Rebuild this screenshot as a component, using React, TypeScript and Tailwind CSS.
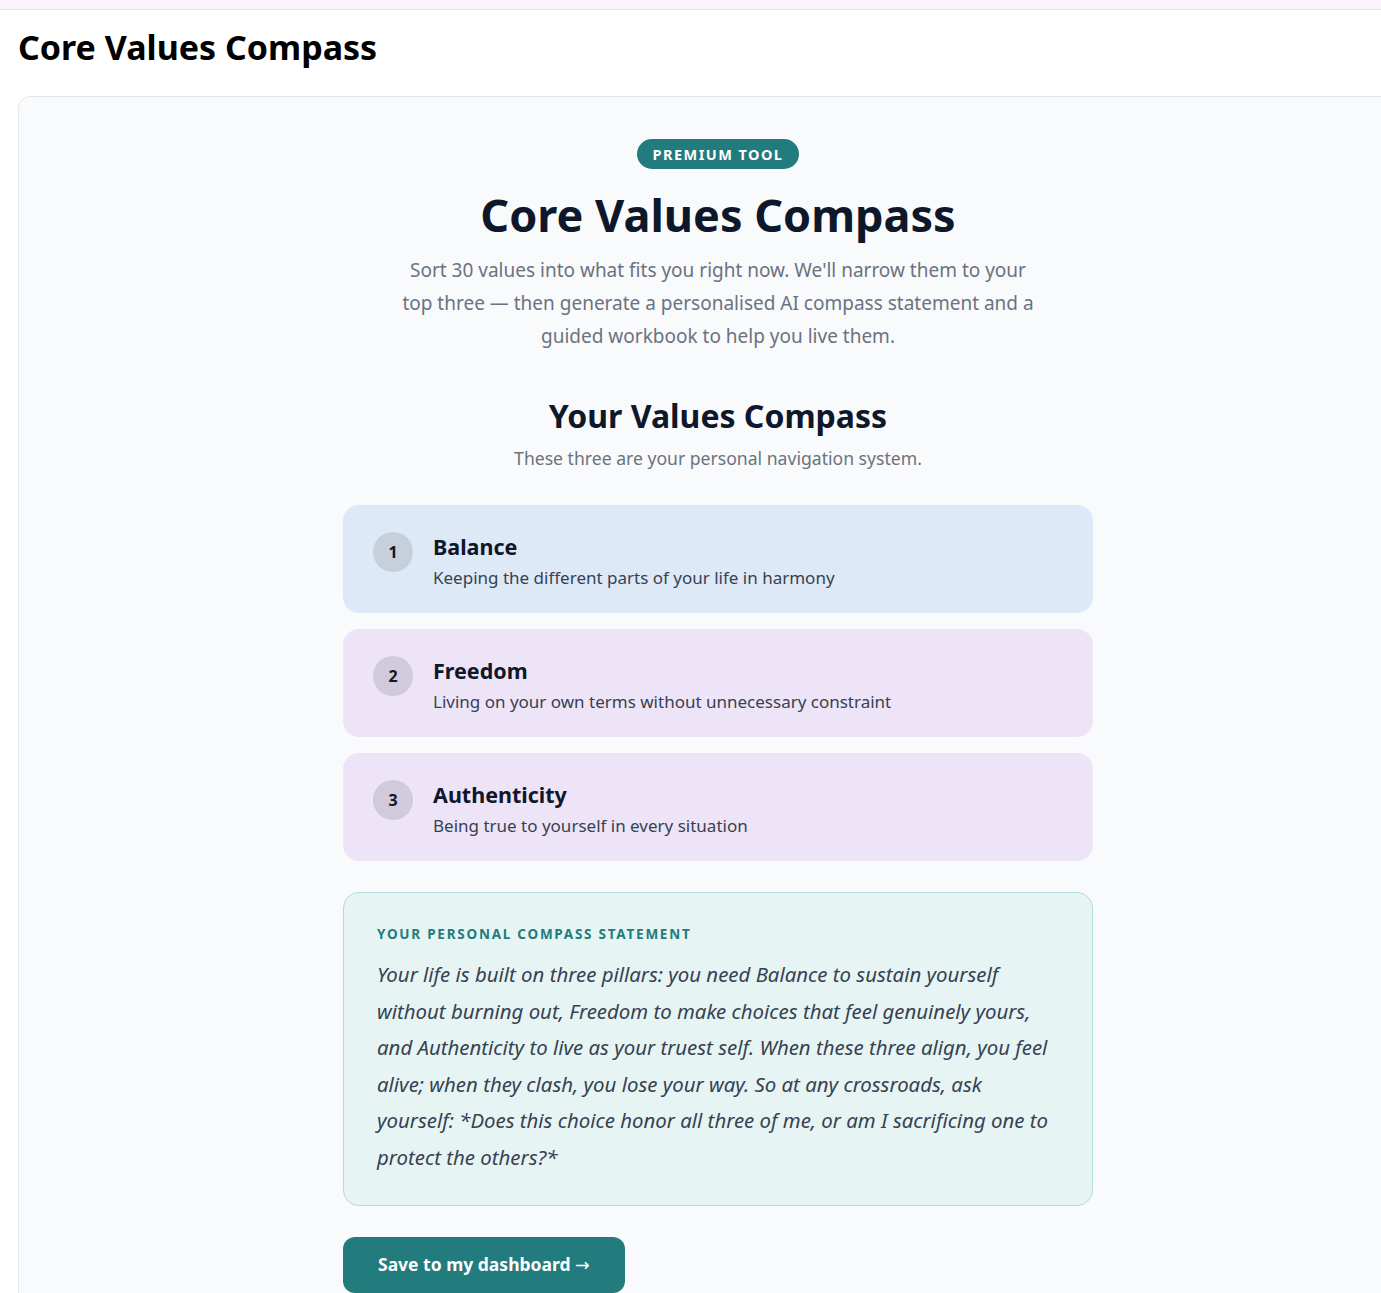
const values = [
  {
    rank: 1,
    name: "Balance",
    desc: "Keeping the different parts of your life in harmony",
    tone: "bg-[#dde9f7]",
    dot: "bg-[#c6d0dd]",
  },
  {
    rank: 2,
    name: "Freedom",
    desc: "Living on your own terms without unnecessary constraint",
    tone: "bg-[#ede4f7]",
    dot: "bg-[#d0cadb]",
  },
  {
    rank: 3,
    name: "Authenticity",
    desc: "Being true to yourself in every situation",
    tone: "bg-[#ede4f7]",
    dot: "bg-[#d0cadb]",
  },
];

function ValueRow({ v }: { v: (typeof values)[number] }) {
  return (
    <div className={`flex items-start gap-5 rounded-2xl px-[30px] pt-[27px] pb-[19px] ${v.tone}`}>
      <span
        className={`flex h-10 w-10 shrink-0 items-center justify-center rounded-full text-[16px] font-bold text-[#111827] ${v.dot}`}
      >
        {v.rank}
      </span>
      <div className="min-w-0">
        <div className="text-[21.5px] font-bold leading-[30px] text-[#0f172a]">{v.name}</div>
        <div className="text-[17px] leading-[32px] text-[#374151]">{v.desc}</div>
      </div>
    </div>
  );
}

export default function App() {
  return (
    <div className="min-h-screen overflow-hidden bg-white font-['Noto_Sans',sans-serif]">
      <div className="h-[10px] border-b border-[#ebe3ec] bg-[#fcf2fb]" />
      <h1 className="px-[18px] pt-[14px] text-[34px] font-bold leading-[46px] text-black">
        Core Values Compass
      </h1>
      <div className="mt-[26px] ml-[18px] w-[1400px] rounded-tl-xl border border-[#e3e6ea] bg-[#f8fafc] pt-[41px] pb-10">
        <div className="mx-auto flex w-[750px] flex-col">
          <div className="flex flex-col items-center text-center">
            <span className="mt-px rounded-full bg-[#227b7d] px-4 py-[5px] text-[14.5px] font-bold leading-5 tracking-[0.1em] text-white">
              PREMIUM TOOL
            </span>
            <h2 className="mt-[17px] text-[45px] font-bold leading-[58px] text-[#0f172a]">
              Core Values Compass
            </h2>
            <p className="mt-[10px] w-[640px] text-[19px] leading-[33px] text-[#6b7280]">
              Sort 30 values into what fits you right now. We'll narrow them to your top three — then
              generate a personalised AI compass statement and a guided workbook to help you live them.
            </p>
            <h3 className="mt-[41px] text-[32px] font-bold leading-[44px] text-[#0f172a]">
              Your Values Compass
            </h3>
            <p className="mt-[5px] text-[17.6px] leading-[30px] text-[#6b7280]">
              These three are your personal navigation system.
            </p>
          </div>

          <div className="mt-[32px] flex flex-col gap-4">
            {values.map((v) => (
              <ValueRow key={v.rank} v={v} />
            ))}
          </div>

          <div className="mt-[31px] rounded-2xl border border-[#b3dcdc] bg-[#e6f4f4] px-[33px] pt-[31px] pb-[29px]">
            <div className="text-[13.5px] font-bold leading-5 tracking-[0.13em] text-[#227b7d]">
              YOUR PERSONAL COMPASS STATEMENT
            </div>
            <p className="mt-[12px] text-[20.4px] italic leading-[36.6px] text-[#374151]">
              Your life is built on three pillars: you need Balance to sustain yourself without burning
              out, Freedom to make choices that feel genuinely yours, and Authenticity to live as your
              truest self. When these three align, you feel alive; when they clash, you lose your way. So
              at any crossroads, ask yourself: *Does this choice honor all three of me, or am I
              sacrificing one to protect the others?*
            </p>
          </div>

          <div className="mt-[31px]">
            <button
              type="button"
              className="h-14 rounded-xl bg-[#227b7d] px-[35px] text-[17.5px] font-bold text-white"
            >
              Save to my dashboard <span className="font-['DejaVu_Sans'] font-normal">→</span>
            </button>
          </div>
        </div>
      </div>
    </div>
  );
}
